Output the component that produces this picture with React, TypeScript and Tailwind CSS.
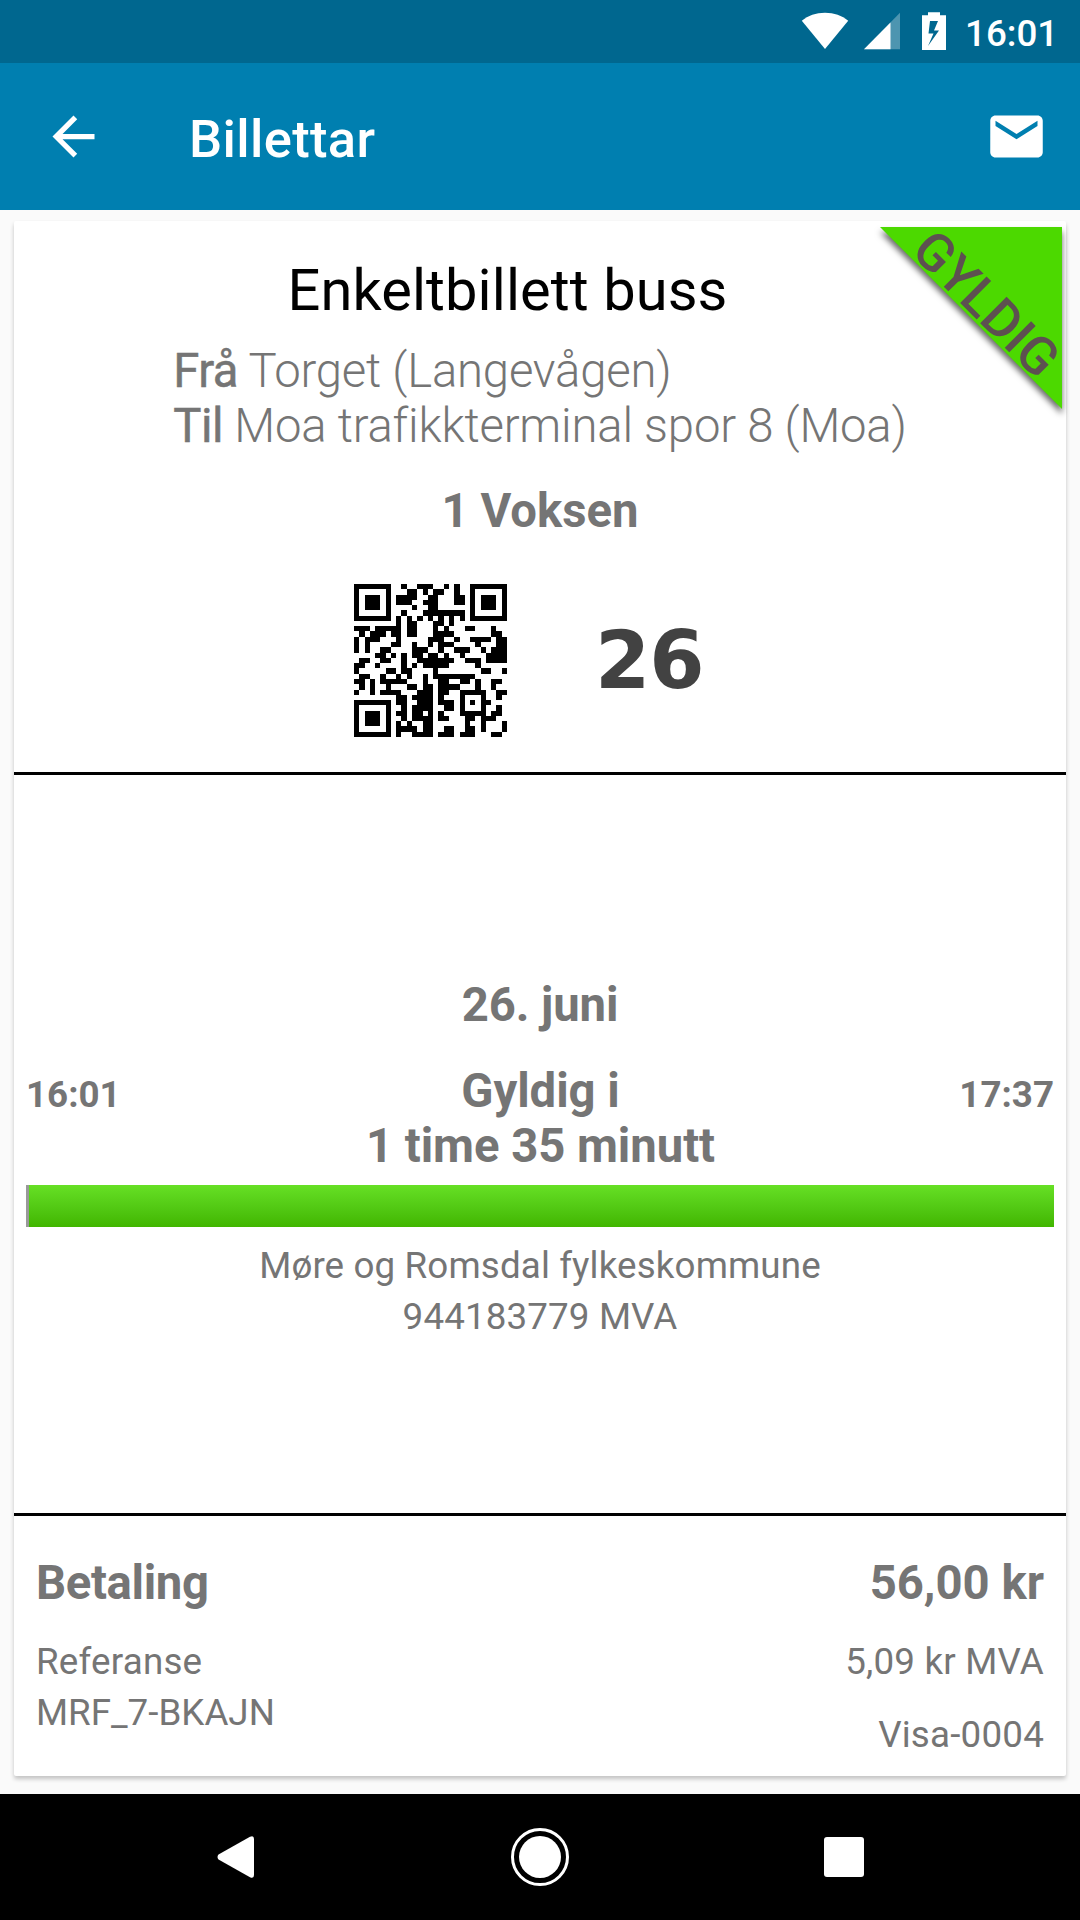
import React from 'react';

const qrRows = [
  '11111110010011100101001111111',
  '10000010001101011001001000001',
  '10111010111100110001101011101',
  '10111010111001110001101011101',
  '10111010000100110000001011101',
  '10000010010001111111101000001',
  '11111110101010101010101111111',
  '00000000101100011010000000000',
  '11101111101100010100011000100',
  '01011101101100011110000000110',
  '10111000100000111001001111011',
  '10100001100100101110000100011',
  '10100110000111001001110010111',
  '00001101010110110100100001111',
  '01100110010011111110011101111',
  '11001000010101111100000100000',
  '10000011011000010000000011001',
  '01100100101001011111111000000',
  '11010111110001001100110100110',
  '01010010001101101111000100100',
  '10010111100011101100111110011',
  '00000000110111101000100010010',
  '11111110110011101110101011000',
  '10000010010111100110100010010',
  '10111010110110101000111110110',
  '10111010010111101100011011100',
  '10111010101001100000010010001',
  '10000010111101100110011010001',
  '11111110100111101110111000110',
];

function QrCode() {
  return (
    <svg className="w-[153px] h-[153px]" viewBox="0 0 29 29" shapeRendering="crispEdges">
      {qrRows.map((row, y) =>
        row.split('').map((cell, x) =>
          cell === '1' ? <rect key={`${x}-${y}`} x={x} y={y} width={1} height={1} /> : null
        )
      )}
    </svg>
  );
}

function StatusBar() {
  return (
    <div className="h-[63px] bg-[#00678f] text-white flex items-start">
      <svg className="ml-[801px] mt-3 w-12 h-[38px] shrink-0" viewBox="0 0 48 38" fill="currentColor">
        <path d="M24 37L.8 8.8C7 3.6 15 .8 24 .8s17 2.8 23.2 8z" />
      </svg>
      <svg className="ml-[15px] mt-3 w-9 h-[38px] shrink-0" viewBox="0 0 36 38" fill="currentColor">
        <path d="M36 .8V37.3H0z" opacity=".3" />
        <path d="M26.5 10.5V37.3H0z" />
      </svg>
      <svg className="ml-[22px] mt-3 w-6 h-[38px] shrink-0" viewBox="0 0 24 38" fill="currentColor">
        <path
          fillRule="evenodd"
          d="M6 .3h12v2.9h6V38H0V3.2h6zM8 9L6.5 21.5h5L6 34l11-15.5h-5L16 9z"
        />
      </svg>
      <span className="ml-[19px] mt-[2px] text-[36.75px] leading-[63px] font-medium">16:01</span>
    </div>
  );
}

function Toolbar() {
  return (
    <header className="h-[147px] bg-[#007fb0] text-white flex items-center pl-[42px] pr-8">
      <svg className="w-[63px] h-[63px]" viewBox="0 0 24 24" fill="currentColor">
        <path d="M20 11H7.83l5.59-5.59L12 4l-8 8 8 8 1.41-1.41L7.83 13H20v-2z" />
      </svg>
      <h1 className="ml-[84px] mt-1 flex-1 text-[52.5px] leading-[62px] font-medium tracking-[0.35px]">Billettar</h1>
      <svg className="mb-px w-[63px] h-[63px]" viewBox="0 0 24 24" fill="currentColor">
        <path d="M20 4H4c-1.1 0-1.99.9-1.99 2L2 18c0 1.1.9 2 2 2h16c1.1 0 2-.9 2-2V6c0-1.1-.9-2-2-2zm0 4l-8 5-8-5V6l8 5 8-5v2z" />
      </svg>
    </header>
  );
}

function ValidRibbon() {
  return (
    <svg className="absolute top-[6px] right-1 w-[182px] h-[182px] overflow-visible" viewBox="0 0 182 182">
      <path d="M0 0H182V182z" fill="#4cd900" className="drop-shadow-[0_5px_3px_rgba(0,0,0,0.6)]" />
      <text
        transform="translate(107 76) rotate(45)"
        y="19"
        textAnchor="middle"
        fill="#5d5050"
        className="text-[52.5px] font-medium"
      >
        GYLDIG
      </text>
    </svg>
  );
}

function TicketInfo() {
  return (
    <section className="h-[551px] pt-[35px] flex flex-col items-center">
      <h2 className="pr-[65px] text-[57.75px] leading-[68px] tracking-[0.1px] text-black">Enkeltbillett buss</h2>
      <div className="mt-5 text-[47.25px] leading-[55px] font-light tracking-[-0.2px]">
        <p><span className="font-normal tracking-[-0.5px] [-webkit-text-stroke:0.5px]">Frå</span> Torget (Langevågen)</p>
        <p><span className="font-normal tracking-[-0.5px] [-webkit-text-stroke:0.5px]">Til</span> Moa trafikkterminal spor 8 (Moa)</p>
      </div>
      <p className="mt-[30px] text-[47.25px] leading-[55px] font-bold">1 Voksen</p>
      <div className="mt-[45px] flex items-center gap-[88px] self-start pl-[340px]">
        <QrCode />
        <span className="font-['DejaVu_Sans',sans-serif] text-[79.5px] leading-[80px] font-bold tracking-[-1px] text-[#424242]">26</span>
      </div>
    </section>
  );
}

function Validity() {
  return (
    <section className="h-[741px] border-t-3 border-black px-3 pt-[203px] text-center">
      <p className="text-[47.25px] leading-[55px] font-bold tracking-[-0.1px]">26. juni</p>
      <div className="mt-[30px] flex justify-between font-bold">
        <span className="text-[36.75px] leading-[63px]">16:01</span>
        <p className="pt-px pl-px text-[47.25px] leading-[55px] tracking-[-0.05px]">
          Gyldig i<br />1 time 35 minutt
        </p>
        <span className="text-[36.75px] leading-[63px]">17:37</span>
      </div>
      <div className="mt-[11px] h-[42px] border-l-3 border-[#999] bg-linear-to-b from-[#66e024] to-[#41b600]" />
      <p className="mt-[13px] text-[36.75px] leading-[51px] tracking-[0.13px]">
        Møre og Romsdal fylkeskommune<br />944183779 MVA
      </p>
    </section>
  );
}

function Payment() {
  return (
    <section className="h-[263px] border-t-3 border-black px-[22px] pt-10 flex justify-between text-[36.75px] leading-[51px] tracking-[0.2px]">
      <div>
        <h3 className="text-[47.25px] leading-[55px] font-bold tracking-[-0.35px]">Betaling</h3>
        <p className="mt-[25px]">Referanse</p>
        <p className="tracking-normal">MRF_7-BKAJN</p>
      </div>
      <div className="text-right">
        <h3 className="text-[47.25px] leading-[55px] font-bold tracking-normal">56,00 kr</h3>
        <p className="mt-[25px]">5,09 kr MVA</p>
        <p className="mt-[22px]">Visa-0004</p>
      </div>
    </section>
  );
}

function NavBar() {
  return (
    <nav className="h-[126px] bg-black text-white flex items-center justify-between pl-[217px] pr-[216px]">
      <svg className="w-[38px] h-[42px]" viewBox="0 0 38 42" fill="currentColor">
        <path d="M1.5 18.5L33 .8Q37 -1 37 3V39Q37 43 33 41.2L1.5 23.5Q-.5 21 1.5 18.5z" />
      </svg>
      <svg className="w-[58px] h-[58px]" viewBox="0 0 58 58" fill="currentColor">
        <circle cx="29" cy="29" r="27.5" fill="none" stroke="currentColor" strokeWidth="3" />
        <circle cx="29" cy="29" r="21" />
      </svg>
      <div className="w-10 h-10 rounded-[3px] bg-white" />
    </nav>
  );
}

export default function App() {
  return (
    <div className="w-[1080px] h-[1920px] bg-[#fafafa] font-[Roboto,sans-serif] text-[#757575]">
      <StatusBar />
      <Toolbar />
      <main className="h-[1584px] px-[14px] pt-[11px]">
        <article className="relative h-[1555px] bg-white rounded-[2px] shadow-[0_3px_4px_rgba(0,0,0,0.22)]">
          <TicketInfo />
          <Validity />
          <Payment />
          <ValidRibbon />
        </article>
      </main>
      <NavBar />
    </div>
  );
}
